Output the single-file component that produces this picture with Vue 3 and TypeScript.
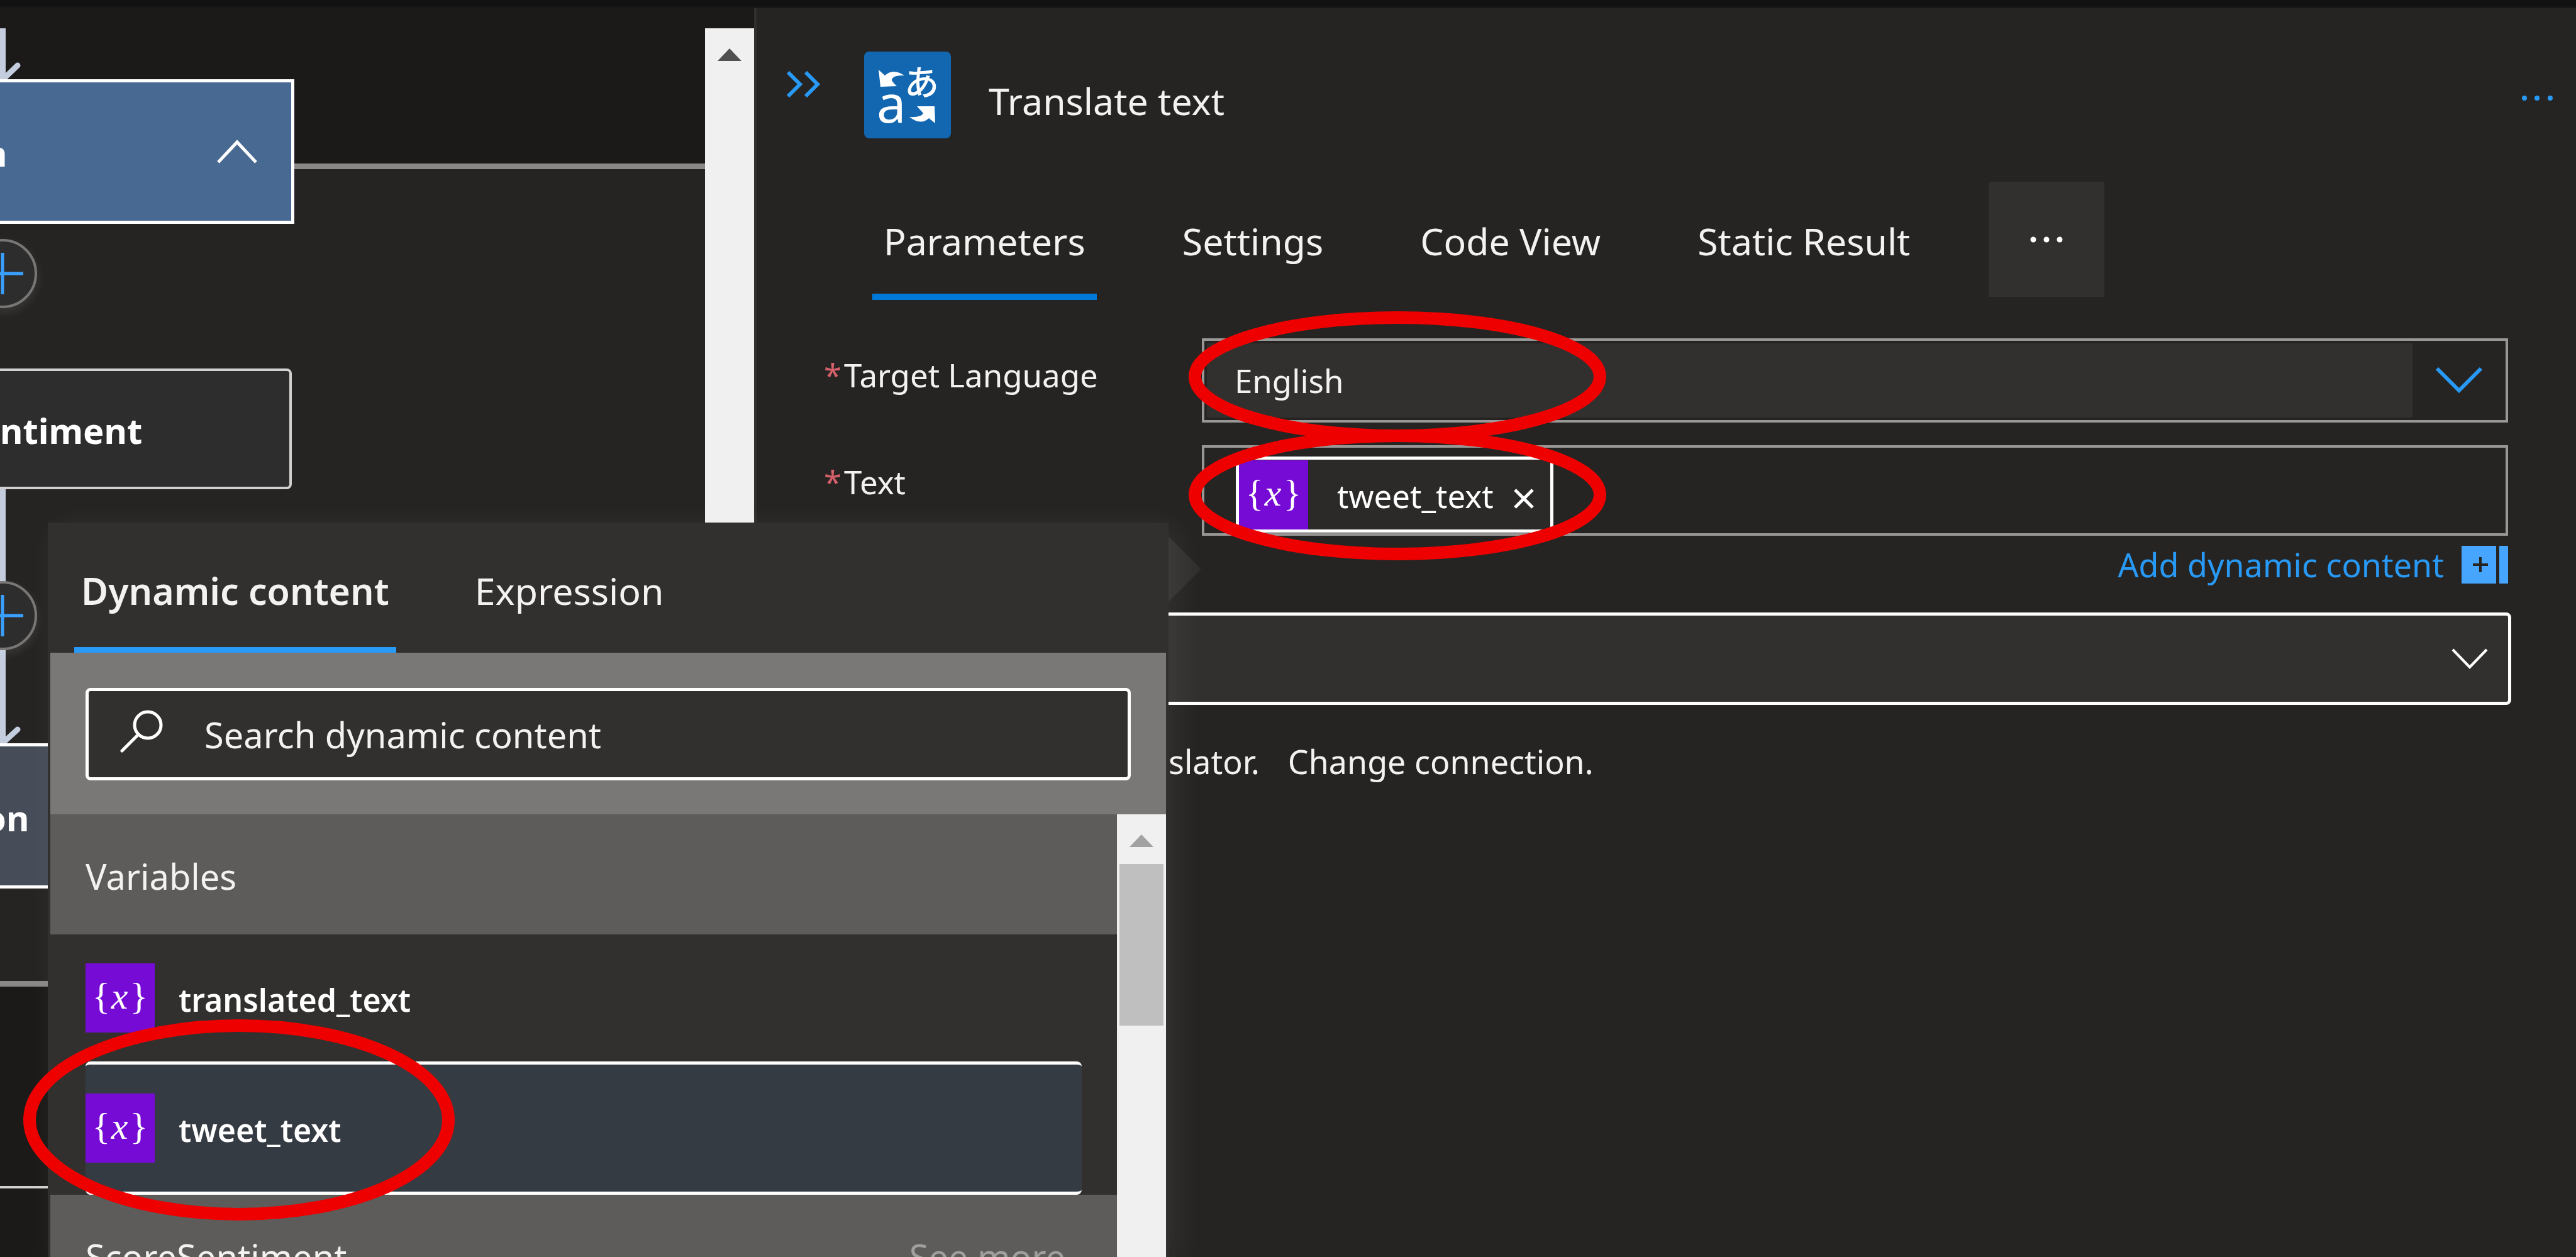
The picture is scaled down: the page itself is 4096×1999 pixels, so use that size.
<script setup lang="ts">
import { ref } from 'vue'

const tabs = ['Parameters', 'Settings', 'Code View', 'Static Result']
const activeTab = ref('Parameters')

const pickerTabs = ['Dynamic content', 'Expression']
const activePicker = ref('Dynamic content')

const language = ref('English')
const parameter = ref('')
const query = ref('')

const variables = ['translated_text', 'tweet_text']
const selected = ref('tweet_text')
</script>

<template>
  <div class="designer">
    <div class="topbar"></div>
    <div class="workspace">
      <section class="canvas" aria-label="Workflow">
        <div class="scope"></div>
        <svg class="edges" width="60" height="1200" viewBox="0 0 60 1200" fill="none" stroke="#c3cdde">
          <path d="M4 32V116M4 765V1172" stroke-width="10" />
          <path d="M4 114L28 91M4 1169L28 1147" stroke-width="9" stroke-linecap="round" />
        </svg>
        <div class="node node-condition">
          <span>n</span>
          <button class="collapse" aria-label="Collapse">
            <svg width="64" height="38" viewBox="0 0 64 38" fill="none" stroke="#fff" stroke-width="5"><path d="M2 36L32 4L62 36" /></svg>
          </button>
        </div>
        <button class="insert insert-first" aria-label="Insert a new step">
          <svg width="66" height="66" viewBox="0 0 66 66" stroke="#3aa0ff" stroke-width="5"><path d="M33 0V66M0 33H66" /></svg>
        </button>
        <div class="node node-score"><span>ntiment</span></div>
        <button class="insert insert-second" aria-label="Insert a new step">
          <svg width="66" height="66" viewBox="0 0 66 66" stroke="#3aa0ff" stroke-width="5"><path d="M33 0V66M0 33H66" /></svg>
        </button>
        <div class="node node-nested"><span>on</span></div>
        <div class="node node-last"></div>
      </section>

      <div class="scrollbar canvas-scroll">
        <svg width="38" height="20" viewBox="0 0 38 20" fill="#505050"><path d="M19 0L38 20H0Z" /></svg>
      </div>

      <section class="panel">
        <header class="panel-head">
          <button class="hide" aria-label="Collapse panel">
            <svg width="54" height="42" viewBox="0 0 54 42" fill="none" stroke="#2899f5" stroke-width="6"><path d="M3 2L22 21L3 40M31 2L50 21L31 40" /></svg>
          </button>
          <svg class="connector" width="138" height="138" viewBox="0 0 138 138" fill="#fff">
            <rect width="138" height="138" rx="8" fill="#1267b0" />
            <path d="M23 29L33 38Q46 26 64 38Q47 37 44 44Q43 47 52 55L26 56Z" />
            <path d="M84 87L112 87L113 114L103 106Q90 118 72 104Q91 105 94 98Z" />
            <text x="64" y="69" class="kana">あ</text>
            <text x="20" y="113" class="latin">a</text>
          </svg>
          <h1>Translate text</h1>
          <button class="menu" aria-label="More commands">
            <svg width="50" height="20" viewBox="0 0 50 20" fill="#2899f5"><circle cx="4" cy="10" r="4" /><circle cx="24" cy="10" r="4" /><circle cx="45" cy="10" r="4" /></svg>
          </button>
        </header>

        <nav class="tabbar">
          <div class="tabs" role="tablist">
            <button v-for="t in tabs" :key="t" role="tab" class="tab" :class="{ active: t === activeTab }" :aria-selected="t === activeTab" @click="activeTab = t">{{ t }}</button>
          </div>
          <button class="overflow" aria-label="More tabs">
            <svg width="52" height="20" viewBox="0 0 52 20" fill="#fff"><circle cx="5" cy="10" r="4.5" /><circle cx="26" cy="10" r="4.5" /><circle cx="47" cy="10" r="4.5" /></svg>
          </button>
        </nav>

        <form class="form" @submit.prevent>
          <div class="row">
            <label for="language"><i>*</i>Target Language</label>
            <div class="field select-field">
              <select id="language" v-model="language">
                <option>English</option>
              </select>
              <svg width="76" height="44" viewBox="0 0 76 44" fill="none" stroke="#2899f5" stroke-width="6"><path d="M3 3L38 38L73 3" /></svg>
            </div>
          </div>

          <div class="row">
            <label id="text-label"><i>*</i>Text</label>
            <div class="field token-field" role="textbox" aria-labelledby="text-label">
              <span class="token">
                <svg class="token-icon" viewBox="0 0 110 110" fill="#fff"><text x="25" y="72">{</text><text x="54" y="72" class="var">x</text><text x="85" y="72">}</text></svg>
                <span class="token-name">tweet_text</span>
                <button type="button" class="remove" aria-label="Remove">
                  <svg width="32" height="32" viewBox="0 0 32 32" stroke="#fff" stroke-width="5"><path d="M2 2L30 30M30 2L2 30" /></svg>
                </button>
              </span>
            </div>
          </div>

          <a href="#" class="add-dynamic">
            Add dynamic content
            <svg width="74" height="60" viewBox="0 0 74 60"><path d="M0 0H55V60H0ZM60 0H74V60H60Z" fill="#45a5ff" /><path d="M30 18V42M18 30H42" stroke="#252423" stroke-width="4" /></svg>
          </a>

          <div class="parameter">
            <select v-model="parameter" aria-label="New parameter">
              <option value=""></option>
            </select>
            <svg width="58" height="34" viewBox="0 0 58 34" fill="none" stroke="#fff" stroke-width="4"><path d="M2 2L29 30L56 2" /></svg>
          </div>

          <p class="connection"><span>slator.</span><a href="#">Change connection.</a></p>
        </form>
      </section>
    </div>

    <aside class="picker">
      <svg class="pointer" width="52" height="104" viewBox="0 0 52 104">
        <defs><linearGradient id="fade"><stop offset="0" stop-color="#3b3a39" /><stop offset="1" stop-color="#2f2e2d" /></linearGradient></defs>
        <path d="M0 0L52 52L0 104Z" fill="url(#fade)" />
      </svg>
      <div class="picker-tabs" role="tablist">
        <button v-for="t in pickerTabs" :key="t" role="tab" :class="{ active: t === activePicker }" :aria-selected="t === activePicker" @click="activePicker = t">{{ t }}</button>
      </div>
      <div class="search">
        <label class="search-box">
          <svg width="68" height="68" viewBox="0 0 68 68" fill="none" stroke="#fff" stroke-width="5"><circle cx="44" cy="24" r="21" /><path d="M29 39L3 65" stroke-linecap="round" /></svg>
          <input v-model="query" type="text" placeholder="Search dynamic content" aria-label="Search dynamic content" />
        </label>
      </div>
      <div class="results">
        <div class="list">
          <h2>Variables</h2>
          <button v-for="v in variables" :key="v" class="item" :class="{ selected: v === selected }" @click="selected = v">
            <svg class="item-icon" viewBox="0 0 110 110" fill="#fff"><text x="25" y="72">{</text><text x="54" y="72" class="var">x</text><text x="85" y="72">}</text></svg>
            <span>{{ v }}</span>
          </button>
          <h2>ScoreSentiment <a href="#">See more</a></h2>
        </div>
        <div class="scrollbar list-scroll">
          <svg width="38" height="20" viewBox="0 0 38 20" fill="#a2a2a2"><path d="M19 0L38 20H0Z" /></svg>
          <div class="thumb"></div>
        </div>
      </div>
    </aside>

    <svg class="mark mark-language" width="664" height="208" viewBox="0 0 664 208"><ellipse cx="332" cy="104" rx="322" ry="94" /></svg>
    <svg class="mark mark-token" width="664" height="208" viewBox="0 0 664 208"><ellipse cx="332" cy="104" rx="322" ry="94" /></svg>
    <svg class="mark mark-item" width="686" height="320" viewBox="0 0 686 320"><ellipse cx="343" cy="160" rx="333" ry="150" /></svg>
  </div>
</template>

<style>
body {
  background: #1b1a19;
}
</style>

<style scoped>
.designer {
  position: relative;
  display: flex;
  flex-direction: column;
  height: 100vh;
  overflow: hidden;
  background: #1b1a19;
  color: #f3f2f1;
  font: 400 52px/60px "Noto Sans", "Open Sans", sans-serif;
}
.designer * {
  box-sizing: border-box;
}
button,
select,
input {
  margin: 0;
  padding: 0;
  border: 0;
  background: none;
  color: inherit;
  font: inherit;
}
a {
  color: inherit;
  text-decoration: none;
}
svg {
  display: block;
  flex: none;
}
.topbar {
  flex: none;
  height: 13px;
  background: linear-gradient(#111 9px, #1b1a19 13px);
}
.workspace {
  display: flex;
  flex: 1;
  min-height: 0;
}

/* workflow canvas */
.canvas {
  position: relative;
  flex: 0 0 1121px;
  overflow: hidden;
}
.scope {
  position: absolute;
  top: 247px;
  left: -20px;
  right: -20px;
  height: 1309px;
  border: 9px solid #8a8886;
  background: #252423;
}
.edges {
  position: absolute;
  top: 0;
  left: 0;
}
.node {
  position: absolute;
  left: -40px;
  display: flex;
  align-items: center;
  justify-content: space-between;
  border: 5px solid #fff;
  padding-left: 10px;
  font-size: 56px;
  font-weight: 700;
  color: #fff;
}
.node span {
  padding-top: 4px;
}
.node-condition {
  top: 113px;
  width: 508px;
  height: 230px;
  padding-right: 54px;
  background: #486991;
}
.node-score {
  top: 573px;
  width: 504px;
  height: 192px;
  padding-left: 36px;
  border: 4px solid #d2d0ce;
  border-radius: 8px;
  background: #2d2d2d;
}
.node-nested {
  top: 1169px;
  width: 508px;
  height: 231px;
  background: #474d58;
}
.node-last {
  top: 1873px;
  width: 504px;
  height: 192px;
  border: 4px solid #d2d0ce;
  background: #1b1a19;
}
.insert {
  position: absolute;
  left: -51px;
  display: flex;
  align-items: center;
  justify-content: center;
  width: 110px;
  height: 110px;
  border: 4px solid #797775;
  border-radius: 50%;
  background: #2d2d2d;
  box-shadow: 0 6px 16px rgba(255, 255, 255, 0.1);
}
.insert-first {
  top: 367px;
}
.insert-second {
  top: 911px;
}
.scrollbar {
  display: flex;
  flex-direction: column;
  flex: 0 0 78px;
  align-items: center;
  padding-top: 32px;
  background: #f0f0f0;
}
.canvas-scroll {
  margin-top: 32px;
}

/* parameter panel */
.panel {
  flex: 1;
  min-width: 0;
  border-left: 4px solid #31302e;
  background: #252423;
}
.panel-head {
  display: flex;
  align-items: flex-start;
  padding: 69px 36px 0 47px;
}
.hide {
  margin: 31px 70px 0 0;
}
.connector {
  margin-right: 60px;
}
.kana {
  font: 500 55px "Noto Sans CJK JP", sans-serif;
}
.latin {
  font-size: 83px;
}
h1 {
  margin: 38px 0 0;
  font-size: 59px;
  font-weight: 400;
  line-height: 80px;
}
.menu {
  margin: 64px 0 0 auto;
}
.tabbar {
  display: flex;
  gap: 107px;
  margin-top: 69px;
  padding-left: 184px;
}
.tabs {
  display: flex;
  gap: 118px;
}
.tab {
  height: 188px;
  padding: 0 18px;
  font-size: 59px;
  white-space: nowrap;
}
.tab.active {
  box-shadow: inset 0 -10px #0078d7;
}
.overflow {
  display: flex;
  align-items: center;
  justify-content: center;
  width: 184px;
  height: 183px;
  background: #31302e;
}
.form {
  display: flex;
  flex-direction: column;
  padding: 61px 108px 0 107px;
}
.row {
  display: flex;
  margin-bottom: 36px;
  font-size: 51px;
}
.row + .add-dynamic {
  margin-top: -20px;
}
.row label {
  flex: 0 0 601px;
  padding-top: 28px;
}
.row label i {
  margin-right: 4px;
  color: #d7616a;
  font-style: normal;
}
.field {
  display: flex;
  flex: 1;
  border: 4px solid #999795;
}
.select-field {
  height: 134px;
  align-items: center;
  padding: 4px 36px 4px 4px;
  gap: 36px;
}
.select-field select {
  flex: 1;
  align-self: stretch;
  appearance: none;
  padding-left: 44px;
  background: #31302e;
  line-height: 72px;
}
.token-field {
  height: 144px;
  padding: 14px 50px 0;
}
.token {
  display: flex;
  align-items: center;
  height: 121px;
  padding-right: 26px;
  border: 5px solid #fff;
  border-radius: 6px;
  background: #2b2a29;
}
.token-icon,
.item-icon {
  width: 110px;
  height: 110px;
  background: #770bd6;
  font: 60px "Liberation Serif", serif;
  text-anchor: middle;
}
.var {
  font-style: italic;
}
.token-name {
  margin: 0 32px 0 46px;
  padding-top: 2px;
  color: #fff;
}
.remove {
  margin-top: 12px;
}
.add-dynamic {
  display: flex;
  align-self: flex-end;
  gap: 28px;
  color: #2899f5;
}
.parameter {
  display: flex;
  align-items: center;
  height: 147px;
  margin: 46px -5px 0 0;
  padding-right: 32px;
  border: 5px solid #fff;
  border-radius: 8px;
  background: #31302e;
}
.parameter select {
  flex: 1;
  align-self: stretch;
  appearance: none;
}
.connection {
  display: flex;
  gap: 45px;
  margin: 60px 0 0;
  padding-left: 548px;
}

/* dynamic content picker */
.picker {
  position: absolute;
  top: 831px;
  bottom: 0;
  left: 76px;
  display: flex;
  flex-direction: column;
  width: 1782px;
  padding: 0 4px;
  background: #31302e;
  box-shadow: 12px 8px 48px rgba(255, 255, 255, 0.07);
}
.pointer {
  position: absolute;
  top: 22px;
  left: 100%;
}
.picker-tabs {
  display: flex;
  gap: 114px;
  padding-left: 38px;
}
.picker-tabs button {
  height: 207px;
  padding: 8px 11px 0;
  font-size: 59px;
}
.picker-tabs .active {
  font-weight: 600;
  box-shadow: inset 0 -9px #2899f5;
}
.search {
  padding: 56px 56px 54px;
  background: #7a7876;
}
.search-box {
  display: flex;
  align-items: center;
  height: 147px;
  padding: 0 50px;
  border: 5px solid #fff;
  border-radius: 8px;
  background: #31302e;
}
.search-box svg {
  margin: 0 66px 10px 0;
}
.search-box input {
  flex: 1;
  min-width: 0;
  height: 100%;
  outline: 0;
  font-size: 56px;
}
.search-box input::placeholder {
  color: #f3f2f1;
  opacity: 1;
}
.results {
  display: flex;
  flex: 1;
  min-height: 0;
}
.list {
  display: flex;
  flex: 1;
  flex-direction: column;
  overflow: hidden;
}
h2 {
  display: flex;
  flex: none;
  align-items: center;
  justify-content: space-between;
  height: 191px;
  margin: 0;
  padding: 4px 82px 0 56px;
  background: #5d5c5a;
  font-size: 56px;
  font-weight: 400;
}
h2 a {
  color: #a19f9d;
}
.item {
  display: flex;
  flex: none;
  align-items: center;
  gap: 38px;
  height: 202px;
  margin: 0 56px;
  border-radius: 8px;
  color: #fff;
  font-size: 50px;
  font-weight: 600;
}
.item span {
  padding-top: 6px;
}
.item.selected {
  height: 212px;
  border: solid #fff;
  border-width: 5px 0;
  background: #353b42;
}
.list-scroll .thumb {
  width: 70px;
  height: 257px;
  margin-top: 27px;
  background: #bfbfbf;
}

/* highlight rings */
.mark {
  position: absolute;
  fill: none;
  stroke: #ee0000;
  stroke-width: 20px;
  pointer-events: none;
}
.mark-language {
  top: 495px;
  left: 1890px;
}
.mark-token {
  top: 683px;
  left: 1890px;
}
.mark-item {
  top: 1621px;
  left: 37px;
}
</style>
